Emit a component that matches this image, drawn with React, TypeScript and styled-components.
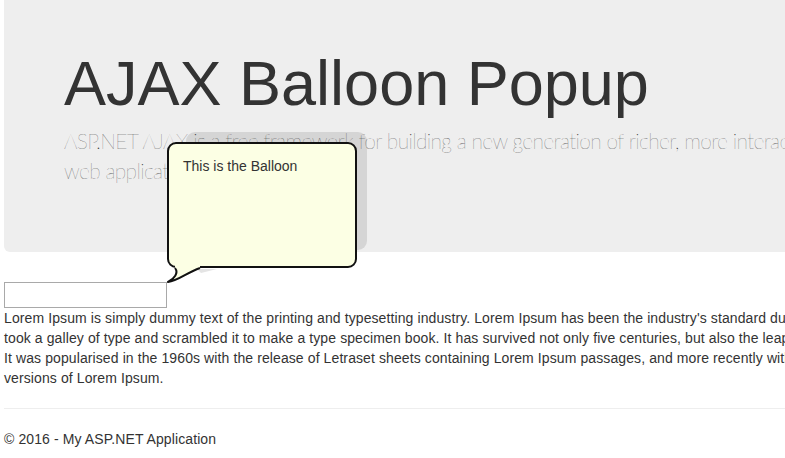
import * as React from 'react';
import styled, { createGlobalStyle } from 'styled-components';

const GlobalStyle = createGlobalStyle`
  html, body {
    margin: 0;
    padding: 0;
    overflow: hidden;
    background: #fff;
  }
  body {
    font-family: 'Liberation Sans', Arial, Helvetica, sans-serif;
    font-size: 14px;
    line-height: 20px;
    color: #333;
  }
`;

export default function App() {
  return (
    <>
      <GlobalStyle />
      <Page>
        <Jumbotron>
          <Title>AJAX Balloon Popup</Title>
          <Lead>
            ASP.NET AJAX is a free framework for building a new generation of richer, more interactive, highly
            personalized cross-browser
            <br />
            web applications.
          </Lead>
        </Jumbotron>
        <TextBox type="text" />
        <Body>
          Lorem Ipsum is simply dummy text of the printing and typesetting industry. Lorem Ipsum has been the
          industry's standard dummy text ever since the 1500s, when an unknown printer
          <br />
          took a galley of type and scrambled it to make a type specimen book. It has survived not only five
          centuries, but also the leap into electronic typesetting, remaining essentially unchanged.
          <br />
          It was popularised in the 1960s with the release of Letraset sheets containing Lorem Ipsum passages, and
          more recently with desktop publishing software like Aldus PageMaker including
          <br />
          versions of Lorem Ipsum.
        </Body>
        <Rule />
        <Footer>© 2016 - My ASP.NET Application</Footer>

        <BalloonShadow />
        <Balloon>
          This is the Balloon
          <Tail width="50" height="30" viewBox="0 0 50 30">
            <path d="M30 8 L50 8 L34 12 Z" fill="#e4e4e4" />
            <path d="M8 4 L8 7 C12 12 7 18 1 21 C11 20 19 12 33 7 L33 4 Z" fill="#fcffe4" />
            <path
              d="M8 7 C12 12 7 18 1 21 C11 20 19 12 33 7"
              fill="none"
              stroke="#111"
              strokeWidth="2"
              strokeLinejoin="round"
            />
          </Tail>
        </Balloon>
      </Page>
    </>
  );
}

const Page = styled.div`
  position: relative;
  width: 1140px;
  padding-left: 4px;
`;

const Jumbotron = styled.div`
  height: 252px;
  box-sizing: border-box;
  padding: 49px 60px 0 60px;
  background: #eee;
  border-radius: 0 0 6px 6px;
  margin-bottom: 30px;
`;

const Title = styled.h1`
  margin: 0;
  font-family: 'Liberation Sans', Arial, Helvetica, sans-serif;
  font-size: 63px;
  line-height: 69px;
  font-weight: 400;
  color: #333;
  white-space: nowrap;
`;

const Lead = styled.p`
  margin: 8px 0 0 0;
  font-family: Lato, 'Liberation Sans', sans-serif;
  font-size: 21px;
  line-height: 30px;
  font-weight: 200;
  letter-spacing: -0.6px;
  color: #333;
  white-space: nowrap;
`;

const TextBox = styled.input`
  display: block;
  box-sizing: border-box;
  width: 163px;
  height: 26px;
  margin: 0;
  padding: 2px 3px;
  border: 1px solid #a9a9a9;
  background: #fff;
  font-family: 'Liberation Sans', Arial, sans-serif;
  font-size: 13px;
`;

const Body = styled.p`
  margin: 0;
  letter-spacing: 0.1px;
  white-space: nowrap;
`;

const Rule = styled.hr`
  margin: 20px 0;
  border: 0;
  border-top: 1px solid #eee;
  height: 0;
`;

const Footer = styled.p`
  margin: 0;
  letter-spacing: 0.1px;
`;

const BalloonShadow = styled.div`
  position: absolute;
  left: 186px;
  top: 132px;
  width: 181px;
  height: 118px;
  border-radius: 9px;
  background: rgba(0, 0, 0, 0.1);
`;

const Balloon = styled.div`
  position: absolute;
  left: 167px;
  top: 142px;
  width: 190px;
  height: 126px;
  box-sizing: border-box;
  padding: 12px 14px;
  border: 2px solid #111;
  border-radius: 9px;
  background: #fcffe4;
  color: #333;
  font-size: 14px;
  line-height: 20px;
`;

const Tail = styled.svg`
  position: absolute;
  left: -2px;
  top: 117px;
  overflow: visible;
`;
